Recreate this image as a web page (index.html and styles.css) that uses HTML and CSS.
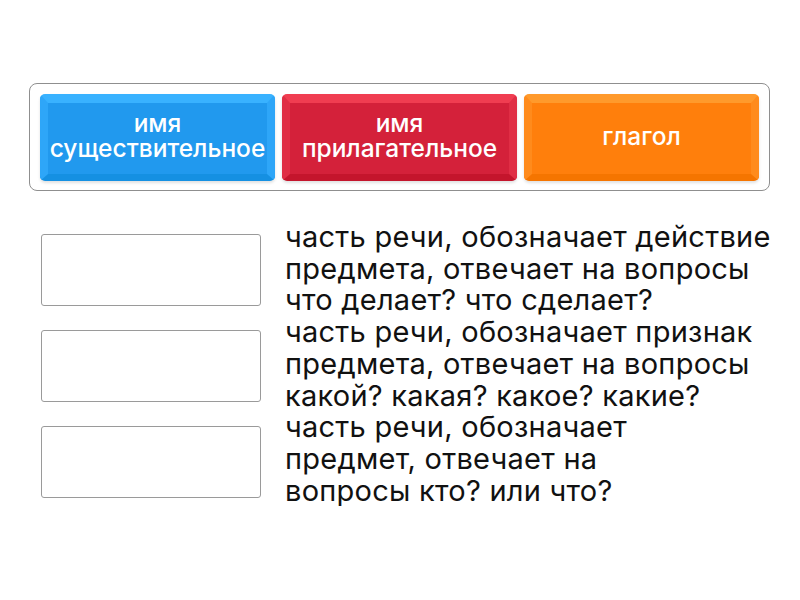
FILE: index.html
```html
<!DOCTYPE html>
<html lang="ru">
<head>
  <meta charset="UTF-8">
  <title>Части речи</title>
  <link rel="stylesheet" href="styles.css">
</head>
<body>
  <div class="bank">
    <div class="tile tile-blue">имя<br>существительное</div>
    <div class="tile tile-red">имя<br>прилагательное</div>
    <div class="tile tile-orange">глагол</div>
  </div>

  <div class="pairs">
    <div class="slots">
      <div class="slot"></div>
      <div class="slot"></div>
      <div class="slot"></div>
    </div>
    <div class="clues">
      <div class="clue">часть речи, обозначает действие<br>предмета, отвечает на вопросы<br>что делает? что сделает?</div>
      <div class="clue">часть речи, обозначает признак<br>предмета, отвечает на вопросы<br>какой? какая? какое? какие?</div>
      <div class="clue">часть речи, обозначает<br>предмет, отвечает на<br>вопросы кто? или что?</div>
    </div>
  </div>
</body>
</html>
```

FILE: styles.css
```css
body { margin: 0; background: #fff; font-family: Inter, "Noto Sans", sans-serif; color: #111; }

.bank { display: flex; gap: 7px; width: 719px; margin: 83px 0 0 29px; padding: 10px 10px 9px 10px; border: 1px solid #8f8f8f; border-radius: 8px; }
.tile { flex: 1; height: 87px; display: flex; align-items: center; justify-content: center; text-align: center; color: #fff; font-size: 24.5px; font-weight: 500; line-height: 25px; border-radius: 5px; border-style: solid; border-width: 9px 8px 7px 8px; padding-bottom: 5px; box-sizing: border-box; box-shadow: 0 2px 3px rgba(0,0,0,.12); }
.tile-blue { background: #2199ee; border-color: #39b2ff #2ea6f8 #1590e2 #2ea6f8; }
.tile-red { background: #d4213a; border-color: #f03d51 #e02e45 #c4152c #e02e45; }
.tile-orange { background: #ff7f0c; border-color: #ff9a2c #ff8b1c #f57500 #ff8b1c; }

.pairs { display: flex; gap: 24px; margin: 30px 0 0 41px; }
.slots { display: flex; flex-direction: column; gap: 24px; padding-top: 13px; }
.slot { width: 220px; height: 72px; border: 1px solid #9a9a9a; border-radius: 3px; box-sizing: border-box; }
.clue { font-size: 29px; line-height: 31.7px; letter-spacing: 0.25px; }
```
